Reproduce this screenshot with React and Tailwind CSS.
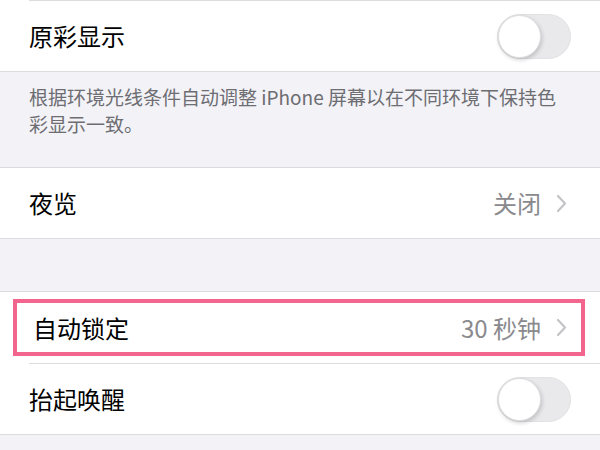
const font = { fontFamily: '"Noto Sans CJK SC", "Noto Sans", sans-serif' };

const Toggle = () => (
    <div className="relative w-[74px] h-[45px] rounded-full bg-[#e9e9eb] border border-[#e2e2e4]">
        <div className="absolute left-0 top-0 w-[43px] h-[43px] rounded-full bg-white border border-[#dddde0] shadow-[1px_2px_4px_rgba(0,0,0,0.18)]" />
    </div>
);

const Chevron = () => (
    <svg width="11" height="19" viewBox="0 0 11 19" fill="none">
        <path d="M2 2l7 7.5L2 17" stroke="#c4c4c8" strokeWidth="2.2" strokeLinecap="round" strokeLinejoin="round" />
    </svg>
);

const Value = ({ children }) => (
    <div className="flex items-center gap-[15px] text-[24px] text-[#8a8a8e]">
        <span>{children}</span>
        <Chevron />
    </div>
);

export default function App() {
    return (
        <div className="w-[600px] h-[450px] overflow-hidden bg-[#f2f2f7] text-black" style={font}>
            <div className="bg-white pl-[29px]">
                <div className="h-px bg-[#dcdce0]" />
            </div>
            <div className="h-[71px] bg-white flex items-center justify-between pl-[29px] pr-[29px] border-b border-[#dcdce0]">
                <span className="text-[24px]">原彩显示</span>
                <Toggle />
            </div>
            <div className="h-[95px] px-[29px] pt-[11px] text-[19px] leading-[27px] text-[#6d6d72]">
                根据环境光线条件自动调整 iPhone 屏幕以在不同环境下保持色彩显示一致。
            </div>
            <div className="h-[72px] bg-white flex items-center justify-between pl-[29px] pr-[33px] border-y border-[#dcdce0]">
                <span className="text-[24px]">夜览</span>
                <Value>关闭</Value>
            </div>
            <div className="h-[52px]" />
            <div className="bg-white border-t border-[#dcdce0]">
                <div className="h-[71px] pt-[7px] pb-[7px] pl-[13px] pr-[15px]">
                    <div className="h-full border-4 border-[#f2668e] flex items-center justify-between pl-[16px] pr-[14px]">
                        <span className="text-[24px]">自动锁定</span>
                        <Value>30 秒钟</Value>
                    </div>
                </div>
                <div className="pl-[29px]">
                    <div className="h-px bg-[#dcdce0]" />
                </div>
                <div className="h-[71px] flex items-center justify-between pl-[29px] pr-[29px] border-b border-[#dcdce0]">
                    <span className="text-[24px]">抬起唤醒</span>
                    <Toggle />
                </div>
            </div>
        </div>
    );
}
